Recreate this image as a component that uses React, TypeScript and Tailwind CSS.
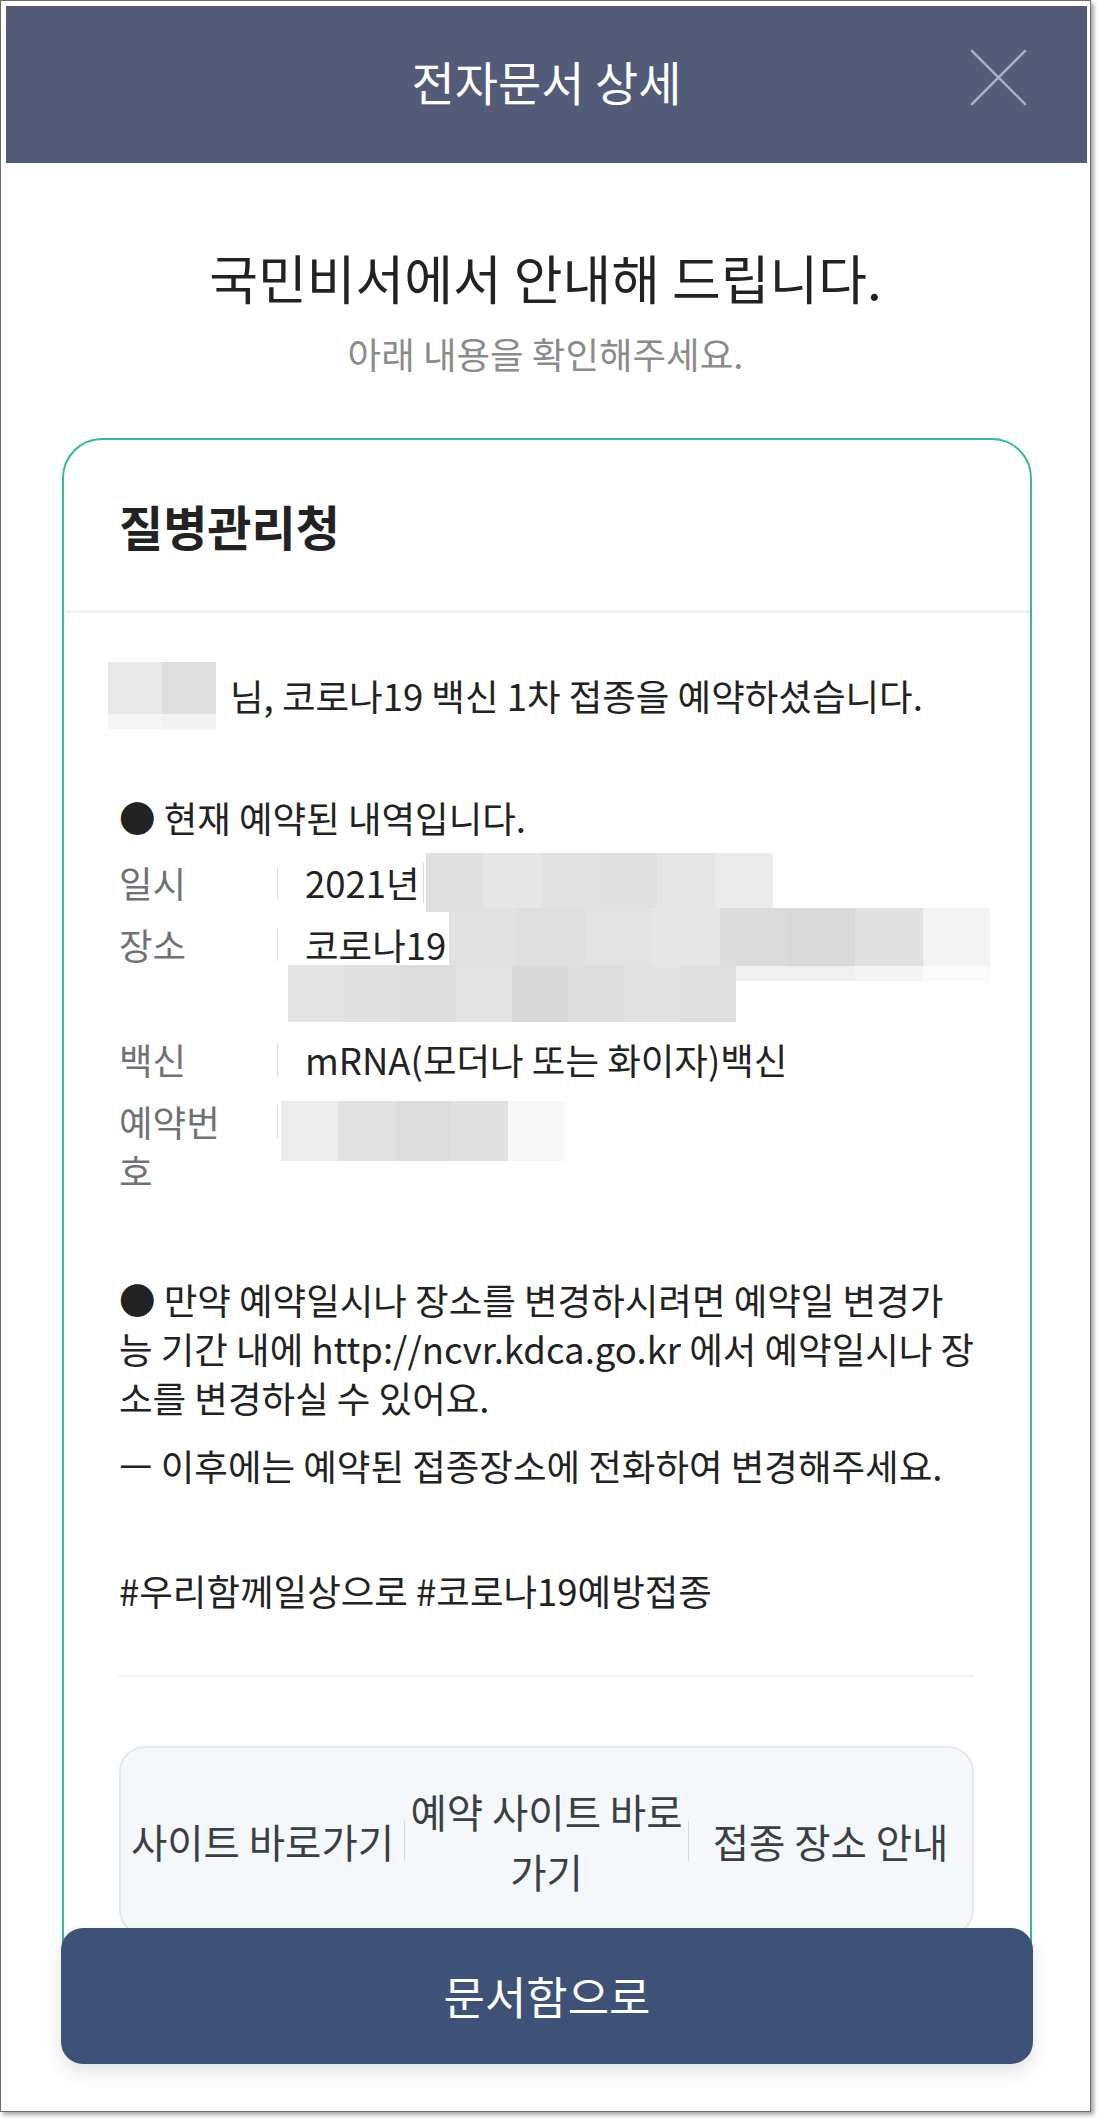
import type { ReactNode } from "react";

const font = "font-['Noto_Sans_CJK_KR','Noto_Sans',sans-serif]";

type MosaicRow = { h: string; cells: string[] };

function Mosaic({ className, rows }: { className: string; rows: MosaicRow[] }) {
  return (
    <span className={`flex shrink-0 flex-col ${className}`}>
      {rows.map((row, i) => (
        <span key={i} className={`flex ${row.h}`}>
          {row.cells.map((c, j) => (
            <span key={j} className={`flex-1 ${c}`} />
          ))}
        </span>
      ))}
    </span>
  );
}

function Row({ label, children }: { label: string; children: ReactNode }) {
  return (
    <div className="flex">
      <div className="w-[118px] shrink-0 text-[#6e7276]">{label}</div>
      <div className="ml-[40px] mt-[9px] h-[32px] w-px shrink-0 bg-[#dddddd]" />
      <div className="ml-[27px] min-w-0 flex-1">{children}</div>
    </div>
  );
}

function CloseIcon() {
  return (
    <svg width="57" height="57" viewBox="0 0 57 57" fill="none">
      <path d="M2 2L55 55M55 2L2 55" stroke="#a9adc1" strokeWidth="2.5" strokeLinecap="round" />
    </svg>
  );
}

export default function App() {
  return (
    <div className={`h-[2118px] w-[1098px] bg-white ${font}`}>
      <div className="relative flex h-[2112px] w-[1091px] flex-col overflow-hidden border border-[#6e6e6e] bg-white pl-[5px] pr-[3px] pt-[5px] shadow-[3px_3px_4px_rgba(0,0,0,0.35)]">
        {/* header */}
        <div className="relative flex h-[157px] shrink-0 items-center justify-center bg-[#525b78] pb-[7px]">
          <div className="text-[47px] leading-[56px] text-white">전자문서 상세</div>
          <div className="absolute right-[60px] top-[43px]">
            <CloseIcon />
          </div>
        </div>

        {/* body */}
        <div className="-ml-[5px] -mr-[3px] min-h-0 flex-1 overflow-hidden">
          <div className="text-center">
            <div className="mt-[84px] text-[53px] leading-[60px] text-[#222222]">국민비서에서 안내해 드립니다.</div>
            <div className="mt-[25px] text-[36.5px] leading-[44px] text-[#8b8b8b]">아래 내용을 확인해주세요.</div>
          </div>

          <div className="ml-[61px] mt-[62px] w-[970px] rounded-[40px] border-2 border-[#33b99d] bg-white">
            <div className="flex h-[170px] items-center pl-[55px] text-[48px] font-bold text-[#222222]">질병관리청</div>
            <div className="h-[3px] bg-[#f0f1f2]" />

            <div className="pb-[120px] pl-[55px] pr-[56px] pt-[49px] text-[36.5px] leading-[49px] text-[#222222]">
              <div className="flex items-center">
                <Mosaic
                  className="-ml-[11px] h-[67px] w-[108px]"
                  rows={[
                    { h: "h-[52px]", cells: ["bg-[#e8e8e8]", "bg-[#dedede]"] },
                    { h: "flex-1", cells: ["bg-[#f5f5f5]", "bg-[#f2f2f2]"] },
                  ]}
                />
                <span className="ml-[14px] whitespace-nowrap">님, 코로나19 백신 1차 접종을 예약하셨습니다.</span>
              </div>

              <div className="mt-[64px]">● 현재 예약된 내역입니다.</div>

              <div className="mt-[16px] flex flex-col gap-[13px]">
                <Row label="일시">
                  <div className="flex h-[49px] items-center whitespace-nowrap">
                    2021년
                    <span className="ml-[3px] h-[40px] w-px bg-[#dcdcdc]" />
                    <Mosaic
                      className="ml-[2px] h-[59px] w-[347px]"
                      rows={[
                        {
                          h: "flex-1",
                          cells: ["bg-[#e0e0e0]", "bg-[#e6e6e6]", "bg-[#e2e2e2]", "bg-[#dfdfdf]", "bg-[#e5e5e5]", "bg-[#ebebeb]"],
                        },
                      ]}
                    />
                  </div>
                </Row>
                <Row label="장소">
                  <div className="flex h-[49px] items-center whitespace-nowrap">
                    코로나19
                    <Mosaic
                      className="ml-[3px] h-[73px] w-[541px]"
                      rows={[
                        {
                          h: "h-[58px]",
                          cells: [
                            "bg-[#e1e1e1]",
                            "bg-[#dedede]",
                            "bg-[#e3e3e3]",
                            "bg-[#e6e6e6]",
                            "bg-[#dbdbdb]",
                            "bg-[#d9d9d9]",
                            "bg-[#e0e0e0]",
                            "bg-[#f3f3f3]",
                          ],
                        },
                        {
                          h: "flex-1",
                          cells: [
                            "bg-[#e2e2e2]",
                            "bg-[#e4e4e4]",
                            "bg-[#e1e1e1]",
                            "bg-[#ebebeb]",
                            "bg-[#f0f0f0]",
                            "bg-[#efefef]",
                            "bg-[#f4f4f4]",
                            "bg-[#fafafa]",
                          ],
                        },
                      ]}
                    />
                  </div>
                  <Mosaic
                    className="-ml-[17px] -mt-[4px] h-[57px] w-[448px]"
                    rows={[
                      {
                        h: "flex-1",
                        cells: [
                          "bg-[#e3e3e3]",
                          "bg-[#e0e0e0]",
                          "bg-[#dcdcdc]",
                          "bg-[#e4e4e4]",
                          "bg-[#d8d8d8]",
                          "bg-[#dddddd]",
                          "bg-[#e2e2e2]",
                          "bg-[#dfdfdf]",
                        ],
                      },
                    ]}
                  />
                </Row>
                <Row label="백신">
                  <div className="whitespace-nowrap">mRNA(모더나 또는 화이자)백신</div>
                </Row>
                <Row label="예약번호">
                  <Mosaic
                    className="-ml-[24px] mt-[4px] h-[60px] w-[284px]"
                    rows={[
                      {
                        h: "flex-1",
                        cells: ["bg-[#ececec]", "bg-[#e1e1e1]", "bg-[#dcdcdc]", "bg-[#e0e0e0]", "bg-[#f7f7f7]"],
                      },
                    ]}
                  />
                </Row>
              </div>

              <div className="mt-[80px] whitespace-nowrap">
                ● 만약 예약일시나 장소를 변경하시려면 예약일 변경가
                <br />능 기간 내에 http://ncvr.kdca.go.kr 에서 예약일시나 장
                <br />소를 변경하실 수 있어요.
              </div>
              <div className="mt-[19px] whitespace-nowrap">ㅡ 이후에는 예약된 접종장소에 전화하여 변경해주세요.</div>

              <div className="mt-[76px] whitespace-nowrap">#우리함께일상으로 #코로나19예방접종</div>

              <div className="mt-[60px] h-[2px] bg-[#eef0f2]" />

              <div className="mt-[69px] flex h-[190px] items-center rounded-[26px] border-2 border-[#e3e8ec] bg-[#f4f8fb] text-center text-[39.5px] leading-[60px] text-[#3a3f45]">
                <div className="flex-1 whitespace-nowrap">사이트 바로가기</div>
                <div className="h-[40px] w-px bg-[#d5d9dd]" />
                <div className="flex-1">예약 사이트 바로 가기</div>
                <div className="h-[40px] w-px bg-[#d5d9dd]" />
                <div className="flex-1 whitespace-nowrap">접종 장소 안내</div>
              </div>
            </div>
          </div>
        </div>

        {/* fixed bottom button */}
        <div className="absolute bottom-0 left-0 right-0 bg-[linear-gradient(to_bottom,transparent_50%,white_50%)] pb-[47px]">
          <button
            type="button"
            className="ml-[60px] flex h-[136px] w-[972px] items-center justify-center rounded-[22px] bg-[#3e5177] text-[45px] text-white shadow-[0_8px_18px_rgba(0,0,0,0.12)]"
          >
            문서함으로
          </button>
        </div>
      </div>
    </div>
  );
}
